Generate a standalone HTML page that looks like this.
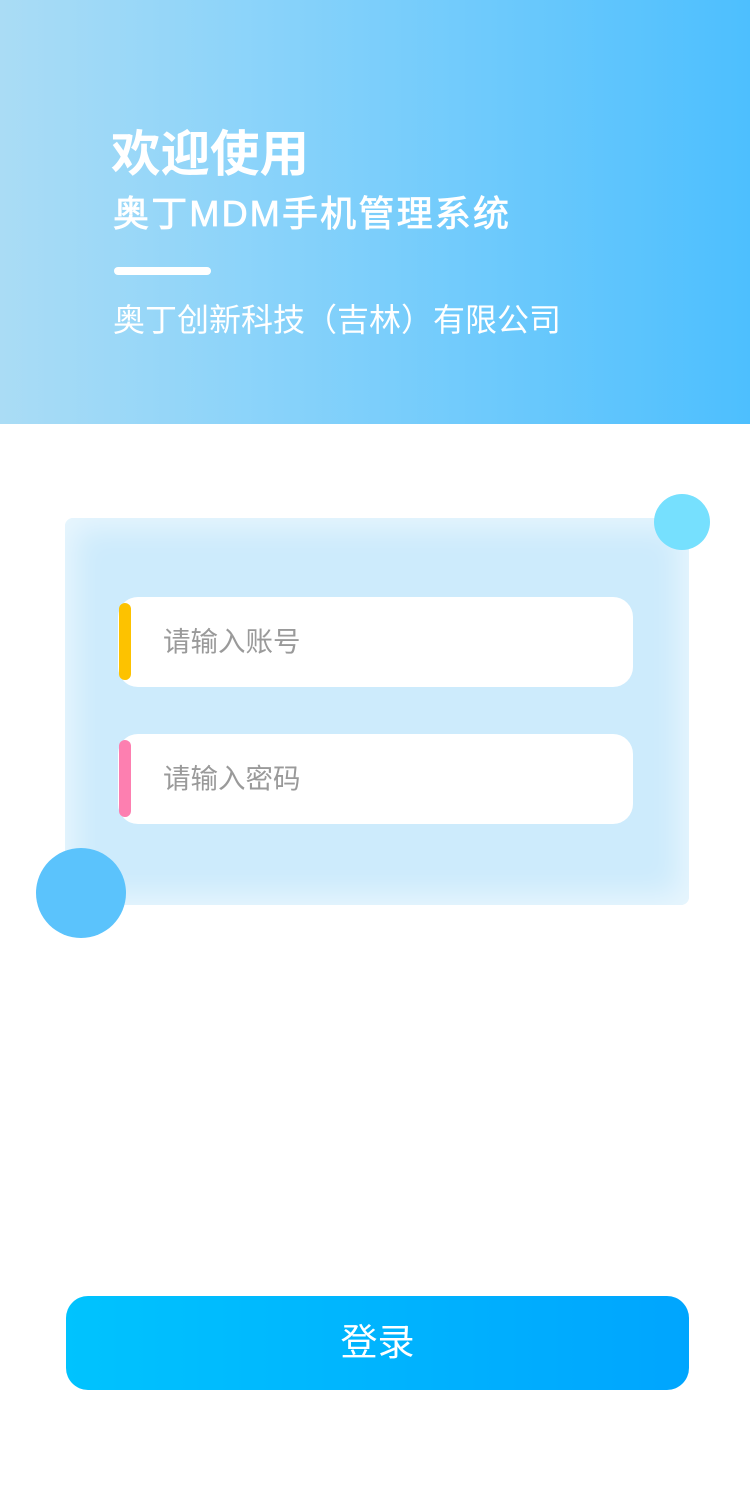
<!DOCTYPE html>
<html><head><meta charset="utf-8"><style>
*{margin:0;padding:0;box-sizing:border-box}
body{width:750px;height:1500px;background:#fff;position:relative;overflow:hidden;font-family:"Liberation Sans","Noto Sans CJK SC",sans-serif}
.hd{position:absolute;left:0;top:0;width:750px;height:424px;background:linear-gradient(90deg,#aadcf5 0%,#8ad3fa 35%,#4dbffe 100%)}
.t{position:absolute;color:#fff;white-space:nowrap;line-height:1}
.card{position:absolute;left:65px;top:518px;width:624px;height:387px;background:#cdebfc;border-radius:8px;box-shadow:inset 0 0 30px 10px rgba(255,255,255,.55)}
.inp{position:absolute;left:118px;width:515px;height:90px;background:#fff;border-radius:20px}
.bar{position:absolute;left:1px;top:6px;width:12px;height:77px;border-radius:6px}
.ph{position:absolute;left:45px;top:31px;font-size:27.5px;color:#9a9a9a;line-height:1}
.c{position:absolute;border-radius:50%}
.btn{position:absolute;left:66px;top:1296px;width:623px;height:94px;border-radius:22px;background:linear-gradient(90deg,#00c3fe,#00a5fe);color:#fff;font-size:37px;text-align:center;line-height:94px}
</style></head><body>
<div class="hd">
<div class="t" style="left:111px;top:130px;font-size:49.5px;font-weight:bold">欢迎使用</div>
<div class="t" style="left:113px;top:196px;font-size:36px;letter-spacing:2.2px;-webkit-text-stroke:0.8px #fff">奥丁MDM手机管理系统</div>
<div style="position:absolute;left:114px;top:267px;width:97px;height:8px;border-radius:4px;background:#fff"></div>
<div class="t" style="left:113px;top:304px;font-size:32px">奥丁创新科技（吉林）有限公司</div>
</div>
<div class="card">
<div class="inp" style="left:53px;top:79px"><div class="bar" style="background:#fdc200"></div><div class="ph">请输入账号</div></div>
<div class="inp" style="left:53px;top:216px"><div class="bar" style="background:#fd7fb0"></div><div class="ph">请输入密码</div></div>
</div>
<div class="c" style="left:654px;top:494px;width:56px;height:56px;background:#76e0fe"></div>
<div class="c" style="left:36px;top:848px;width:90px;height:90px;background:#5bc3fc"></div>
<div class="btn">登录</div>
</body></html>
